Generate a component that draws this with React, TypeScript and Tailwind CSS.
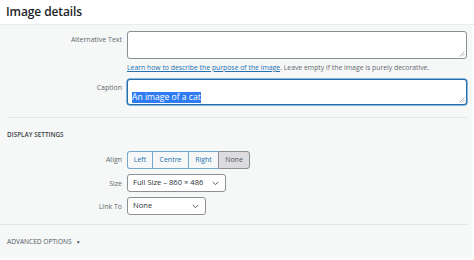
import React from "react";

const font = { fontFamily: '"Open Sans", "Noto Sans", Arial, sans-serif' };

function Grip() {
  return (
    <svg
      className="absolute right-[1px] bottom-[1px]"
      width="6"
      height="6"
      viewBox="0 0 6 6"
    >
      <path d="M5.5 0.5 L0.5 5.5 M5.5 3 L3 5.5" stroke="#9ca0a5" strokeWidth="0.8" />
    </svg>
  );
}

function Chevron() {
  return (
    <svg width="7" height="5" viewBox="0 0 7 5" className="shrink-0">
      <path d="M0.8 1 L3.5 3.7 L6.2 1" fill="none" stroke="#50575e" strokeWidth="1" />
    </svg>
  );
}

function Row({
  label,
  children,
  labelClass = "",
}: {
  label: string;
  children: React.ReactNode;
  labelClass?: string;
}) {
  return (
    <div className="flex">
      <div className={`w-[122px] shrink-0 text-right text-[7px] text-[#646970] ${labelClass}`}>
        {label}
      </div>
      <div className="ml-[5px] flex-1">{children}</div>
    </div>
  );
}

export default function App() {
  const aligns = ["Left", "Centre", "Right", "None"];
  const widths = ["w-[26px]", "w-[37px]", "w-[31px]", "w-[32px]"];

  return (
    <div className="w-[474px] h-[260px] bg-white overflow-hidden" style={font}>
      {/* Header */}
      <div className="h-[25px] flex items-center px-[6px] bg-white border-b border-[#ececec]">
        <h1 className="text-[12px] font-semibold text-[#1d2327] tracking-[-0.1px]">
          Image details
        </h1>
      </div>

      {/* Body */}
      <div className="w-[472px] h-[233px] bg-[#f6f7f7] rounded-bl-[3px] pt-[6px]">
        <div className="pr-[5px]">
          <Row label="Alternative Text" labelClass="pt-[4px]">
            <div className="relative h-[28px] bg-white border border-[#8c8f94] rounded-[3px]">
              <Grip />
            </div>
          </Row>

          <div className="ml-[127px] mt-[3px] text-[6.85px] leading-[12px] text-[#646970]">
            <span className="text-[#2271b1] underline">
              Learn how to describe the purpose of the image
            </span>
            . Leave empty if the image is purely decorative.
          </div>

          <div className="mt-[5px]">
            <Row label="Caption" labelClass="pt-[4px]">
              <div className="relative h-[26px] bg-white border border-[#2271b1] rounded-[3px] shadow-[0_0_0_0.5px_#2271b1] px-[4px] pt-[2px]">
                <span className="bg-[#2f7cf2] text-white text-[8.6px] leading-[11px] inline-block">
                  An image of a cat
                </span>
                <Grip />
              </div>
            </Row>
          </div>
        </div>

        <div className="mt-[12px] ml-[7px] mr-[5px] border-t border-[#e4e5e6]" />

        <div className="ml-[7px] mt-[12px] text-[6.4px] font-semibold uppercase text-[#3c434a] leading-[10px]">
          Display Settings
        </div>

        <div className="mt-[11px] flex flex-col gap-[5px]">
          <Row label="Align" labelClass="pt-[4px]">
            <div className="flex h-[18px]">
              {aligns.map((a, i) => {
                const pressed = a === "None";
                return (
                  <div
                    key={a}
                    className={`${widths[i]} flex items-center justify-center text-[7px] border ${
                      i > 0 ? "-ml-px" : ""
                    } ${i === 0 ? "rounded-l-[3px]" : ""} ${
                      i === aligns.length - 1 ? "rounded-r-[3px]" : ""
                    } ${
                      pressed
                        ? "bg-[#dcdcde] border-[#8c8f94] text-[#50575e] z-10"
                        : "bg-[#f6f7f7] border-[#2271b1]/60 text-[#2271b1]"
                    }`}
                  >
                    {a}
                  </div>
                );
              })}
            </div>
          </Row>

          <Row label="Size" labelClass="pt-[5px]">
            <div className="w-[99px] h-[18px] bg-white border border-[#8c8f94] rounded-[3px] flex items-center justify-between pl-[5px] pr-[6px] text-[7.6px] text-[#2c3338]">
              <span>Full Size – 860 × 486</span>
              <Chevron />
            </div>
          </Row>

          <Row label="Link To" labelClass="pt-[5px]">
            <div className="w-[79px] h-[18px] bg-white border border-[#8c8f94] rounded-[3px] flex items-center justify-between pl-[5px] pr-[6px] text-[7.6px] text-[#2c3338]">
              <span>None</span>
              <Chevron />
            </div>
          </Row>
        </div>

        <div className="mt-[9px] mr-[4px] border-t border-[#e4e5e6]" />

        <div className="ml-[7px] mt-[12px] flex items-center gap-[4px] text-[6.6px] uppercase text-[#50575e] leading-[10px]">
          <span>Advanced Options</span>
          <span className="text-[5px]">▼</span>
        </div>
      </div>
    </div>
  );
}
